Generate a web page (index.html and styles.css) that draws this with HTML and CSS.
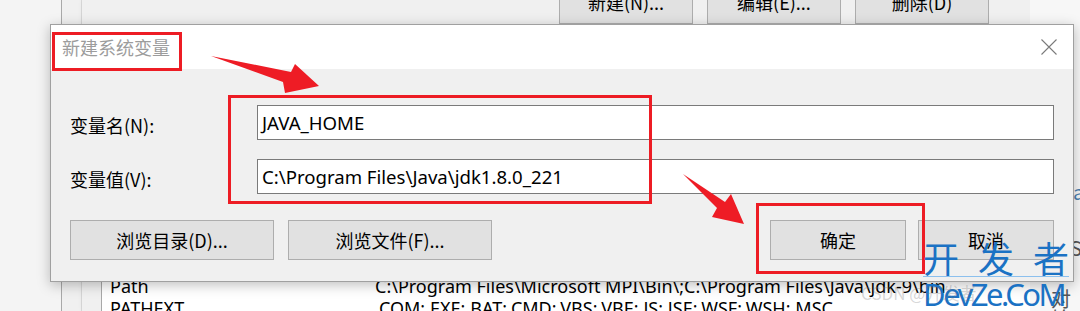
FILE: index.html
```html
<!DOCTYPE html>
<html lang="zh-CN">
<head>
<meta charset="utf-8">
<title>新建系统变量</title>
<link rel="stylesheet" href="styles.css">
</head>
<body>
<div class="bg">
  <div class="strip s1"></div>
  <div class="strip s2"></div>
  <div class="main">
    <div class="toolbar">
      <div class="tbtn">新建(N)...</div>
      <div class="tbtn">编辑(E)...</div>
      <div class="tbtn">删除(D)</div>
    </div>
    <div class="listwrap">
      <div class="strip s3"></div>
      <div class="list">
        <div class="lrow"><span class="lname">Path</span><span class="lval">C:\Program Files\Microsoft MPI\Bin\;C:\Program Files\Java\jdk-9\bin</span></div>
        <div class="lrow"><span class="lname">PATHEXT</span><span class="lval">.COM;.EXE;.BAT;.CMD;.VBS;.VBE;.JS;.JSE;.WSF;.WSH;.MSC</span></div>
      </div>
    </div>
  </div>
  <div class="rightside">
    <div class="rtxt r1">a</div>
    <div class="rtxt r2">S</div>
    <div class="rtxt r3">对始</div>
  </div>
</div>

<div class="dialog">
  <div class="titlebar">
    <span class="title">新建系统变量</span>
    <svg class="close" width="16" height="16" viewBox="0 0 16 16"><path d="M0.5 0.5 L15.5 15.5 M15.5 0.5 L0.5 15.5" stroke="#7a7a7a" stroke-width="1.1" fill="none"/></svg>
  </div>
  <div class="dbody">
    <div class="frow">
      <label class="flabel">变量名(N):</label>
      <div class="finput">JAVA_HOME</div>
    </div>
    <div class="frow">
      <label class="flabel">变量值(V):</label>
      <div class="finput">C:\Program Files\Java\jdk1.8.0_221</div>
    </div>
    <div class="brow">
      <div class="btn wide">浏览目录(D)...</div>
      <div class="btn wide">浏览文件(F)...</div>
      <div class="spacer"></div>
      <div class="btn narrow">确定</div>
      <div class="btn narrow">取消</div>
    </div>
  </div>
</div>

<div class="mark box1"></div>
<div class="mark box2"></div>
<div class="mark box3"></div>

<svg class="arrows" width="1080" height="311" viewBox="0 0 1080 311">
  <polygon points="211,56 291,72 295,64 319,86 285,93 283,82" fill="#ee1c25"/>
  <polygon points="683,174 725,202 731,194 744,224 712,217 717,208" fill="#ee1c25"/>
</svg>

<div class="watermark">
  <div class="csdn">CSDN @开发者</div>
  <div class="wm1">开发者</div>
  <div class="wm2">DevZe.CoM</div>
</div>
</body>
</html>
```

FILE: styles.css
```css
html, body {
  margin: 0;
  padding: 0;
}
body {
  width: 1080px;
  height: 311px;
  overflow: hidden;
  position: relative;
  background: #f5f5f5;
  font-family: "Noto Sans CJK SC", "Noto Sans", sans-serif;
  font-size: 18px;
  color: #000;
}
.bg {
  display: flex;
  height: 311px;
}
.strip {
  flex: none;
  height: 100%;
}
.s1 {
  width: 61px;
  background: #f4f4f4;
  border-right: 1px solid #a9a9a9;
}
.s2 {
  width: 19px;
  background: #f0f0f0;
  border-right: 1px solid #dadada;
}
.main {
  width: 948px;
  display: flex;
  flex-direction: column;
  background: #f0f0f0;
  box-shadow: 2px 0 6px rgba(0,0,0,0.12);
}
.toolbar {
  height: 24px;
  display: flex;
  align-items: flex-end;
  padding-left: 477px;
  gap: 14px;
}
.tbtn {
  width: 134px;
  height: 24px;
  flex: none;
  background: #e1e1e1;
  border: 1px solid #adadad;
  border-top: none;
  display: flex;
  align-items: flex-end;
  justify-content: center;
  line-height: 1;
  padding-bottom: 12px;
  box-sizing: border-box;
  overflow: hidden;
}
.listwrap {
  margin-top: auto;
  display: flex;
  height: 36px;
}
.s3 {
  width: 19px;
  background: #f0f0f0;
  border-right: 1px solid #a9a9a9;
}
.list {
  flex: 1;
  background: #fff;
  overflow: hidden;
}
.lrow {
  height: 22px;
  display: flex;
  align-items: center;
  white-space: nowrap;
  font-family: "Noto Sans", "Noto Sans CJK SC", sans-serif;
  font-size: 18px;
}
.lname {
  width: 265px;
  padding-left: 8px;
  flex: none;
}
.lval {
  flex: none;
}
.rightside {
  flex: 1;
  position: relative;
  background: #f7f7f7;
}
.rtxt {
  position: absolute;
  color: #555;
  font-size: 20px;
  line-height: 1;
}
.r1 { top: 182px; left: 43px; color: #4a7fb0; }
.r2 { top: 238px; left: 40px; }
.r3 { top: 289px; left: 21px; }

.dialog {
  position: absolute;
  left: 50px;
  top: 24px;
  width: 1022px;
  height: 256px;
  border: 1px solid #a0a0a0;
  background: #f0f0f0;
  box-shadow: 0 3px 12px rgba(0,0,0,0.25);
  display: flex;
  flex-direction: column;
}
.titlebar {
  height: 44px;
  background: #fff;
  display: flex;
  align-items: center;
  justify-content: space-between;
  padding: 0 16px 0 11px;
  flex: none;
}
.title {
  color: #9c9c9c;
  font-size: 18px;
  line-height: 1;
}
.close {
  display: block;
}
.dbody {
  flex: 1;
  padding: 36px 19px 0 19px;
  display: flex;
  flex-direction: column;
}
.frow {
  display: flex;
  align-items: center;
  height: 35px;
  margin-bottom: 19px;
}
.flabel {
  width: 187px;
  flex: none;
  padding-top: 4px;
}
.finput {
  flex: 1;
  height: 35px;
  box-sizing: border-box;
  border: 1px solid #7a7a7a;
  background: #fff;
  padding-left: 4px;
  display: flex;
  align-items: center;
  font-family: "Noto Sans", "Noto Sans CJK SC", sans-serif;
  font-size: 18.6px;
  color: #000;
}
.brow {
  display: flex;
  margin-top: 7px;
  height: 40px;
}
.btn {
  height: 40px;
  box-sizing: border-box;
  background: #e1e1e1;
  border: 1px solid #adadad;
  display: flex;
  align-items: center;
  justify-content: center;
  flex: none;
}
.wide {
  width: 204px;
  margin-right: 14px;
}
.narrow {
  width: 136px;
}
.narrow + .narrow {
  margin-left: 12px;
}
.spacer {
  flex: 1;
}

.mark {
  position: absolute;
  border: 3px solid #ed1c24;
  box-sizing: border-box;
}
.box1 { left: 52px; top: 32px; width: 130px; height: 39px; }
.box2 { left: 228px; top: 95px; width: 424px; height: 109px; }
.box3 { left: 756px; top: 203px; width: 169px; height: 71px; }

.arrows {
  position: absolute;
  left: 0;
  top: 0;
}

.watermark {
  position: absolute;
  left: 923px;
  top: 238px;
  width: 157px;
}
.wm1 {
  color: #1b72c4;
  font-size: 36px;
  line-height: 38px;
  letter-spacing: 19px;
  border-bottom: 1px solid #8cc0ee;
  width: 146px;
  white-space: nowrap;
  overflow: hidden;
  font-family: "Noto Sans CJK SC", sans-serif;
}
.wm2 {
  color: #1b72c4;
  font-size: 31px;
  line-height: 34px;
  font-family: "Noto Sans", sans-serif;
  letter-spacing: -2.5px;
  white-space: nowrap;
}
.csdn {
  position: absolute;
  left: -62px;
  top: 46px;
  color: rgba(120,120,120,0.3);
  font-size: 17px;
  line-height: 1;
  white-space: nowrap;
}
```
